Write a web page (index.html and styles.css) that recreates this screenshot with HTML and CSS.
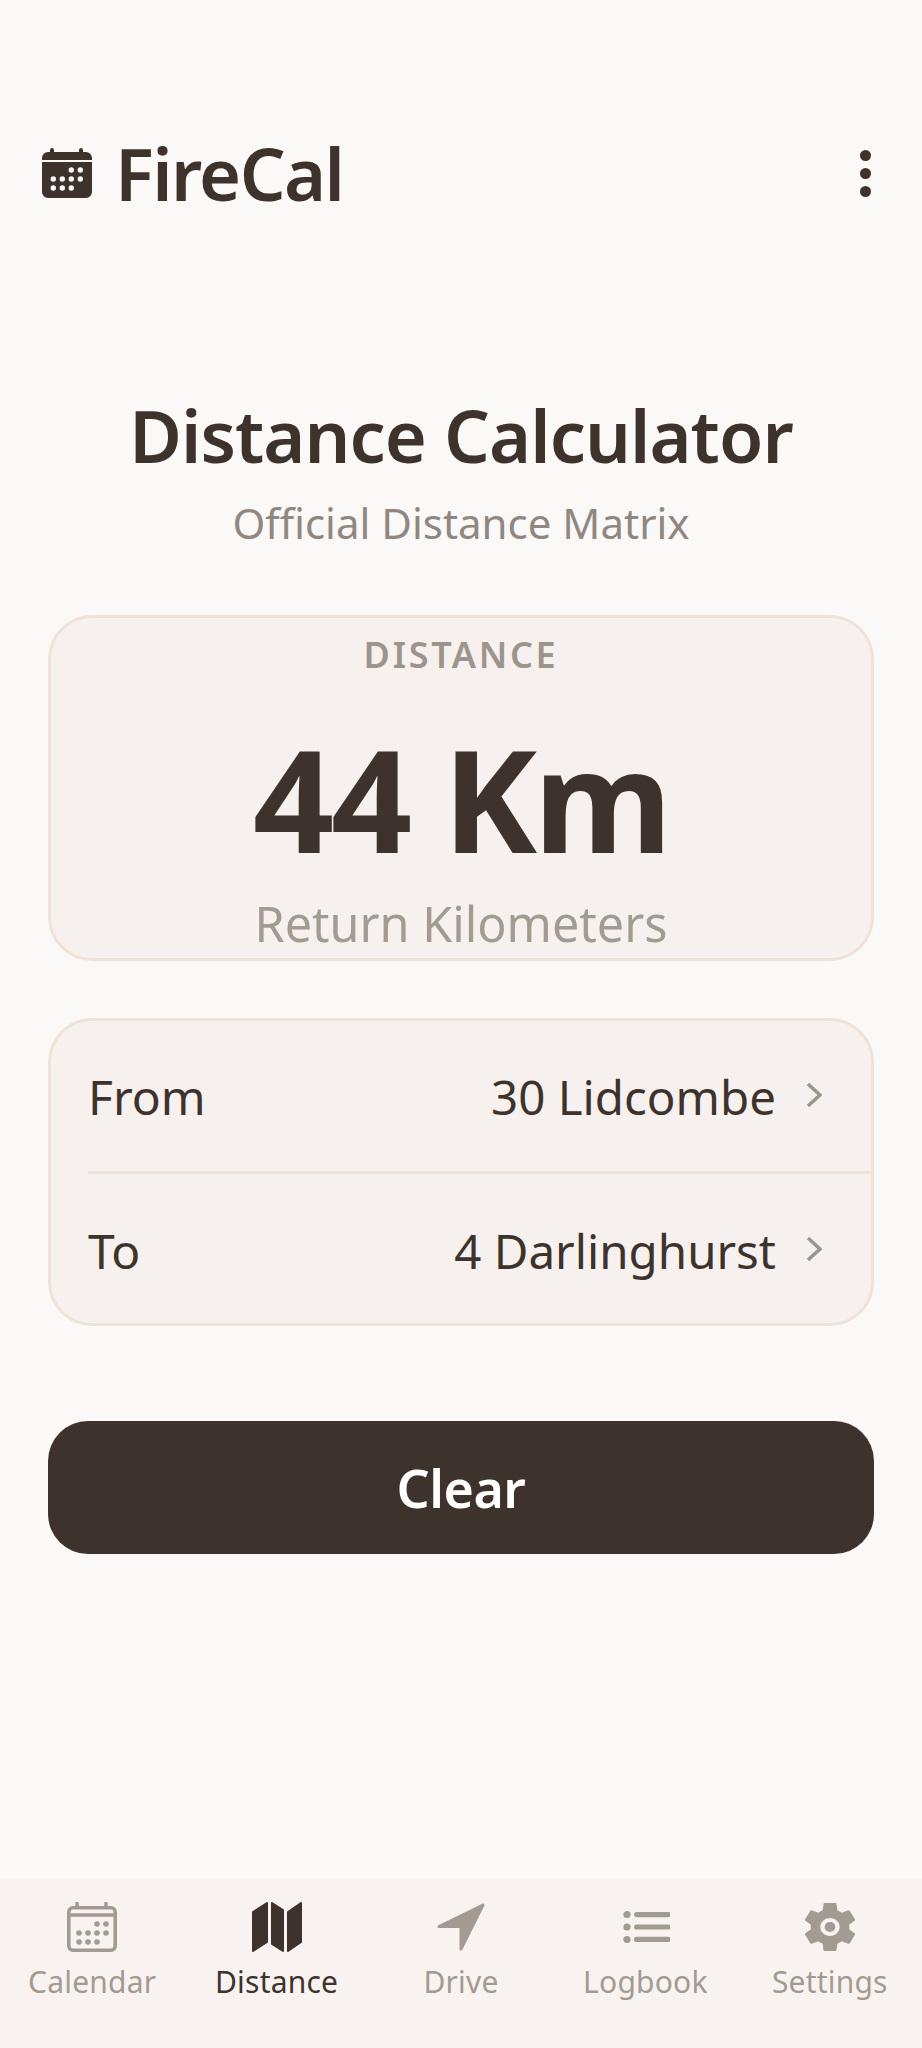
FILE: index.html
```html
<!DOCTYPE html>
<html lang="en">
<head>
<meta charset="utf-8">
<title>FireCal</title>
<link rel="stylesheet" href="styles.css">
</head>
<body>
<div class="app">
  <header class="topbar">
    <div class="brand">
      <svg class="brand-icon" viewBox="0 0 50 50"><path class="fill-dark" fill-rule="evenodd" d="M8 4V2a2 2 0 0 1 4 0v2h25V2a2 2 0 0 1 4 0v2h3a6 6 0 0 1 6 6v2H0v-2a6 6 0 0 1 6-6zM0 14h50v30a6 6 0 0 1-6 6H6a6 6 0 0 1-6-6z"/><g class="fill-page"><circle cx="29.3" cy="22" r="2.7"/><circle cx="38.3" cy="22" r="2.7"/><circle cx="11.3" cy="31" r="2.7"/><circle cx="20.3" cy="31" r="2.7"/><circle cx="29.3" cy="31" r="2.7"/><circle cx="38.3" cy="31" r="2.7"/><circle cx="11.3" cy="40" r="2.7"/><circle cx="20.3" cy="40" r="2.7"/><circle cx="29.3" cy="40" r="2.7"/></g></svg>
      <span class="brand-name">FireCal</span>
    </div>
    <div class="kebab"><i></i><i></i><i></i></div>
  </header>

  <main class="content">
    <h1 class="title">Distance Calculator</h1>
    <p class="subtitle">Official Distance Matrix</p>

    <section class="card result">
      <div class="result-label">DISTANCE</div>
      <div class="result-value">44 Km</div>
      <div class="result-note">Return Kilometers</div>
    </section>

    <section class="card routes">
      <div class="route route-first">
        <span class="route-key">From</span>
        <span class="route-val">30 Lidcombe</span>
        <svg class="chev" viewBox="0 0 16 26"><path d="M2 2l12 11L2 24"/></svg>
      </div>
      <div class="route">
        <span class="route-key">To</span>
        <span class="route-val">4 Darlinghurst</span>
        <svg class="chev" viewBox="0 0 16 26"><path d="M2 2l12 11L2 24"/></svg>
      </div>
    </section>

    <button class="clear">Clear</button>
  </main>

  <nav class="tabs">
    <div class="tab">
      <svg class="tab-icon" viewBox="0 0 50 50"><path class="stroke-muted" d="M1.8 13V44a4.2 4.2 0 0 0 4.2 4.2H44a4.2 4.2 0 0 0 4.2-4.2V10A4.2 4.2 0 0 0 44 5.800H6A4.200 4.200 0 0 0 1.800 10V13H48"/><path class="stroke-muted" d="M10 1.500V5M39 1.500V5"/><g class="fill-muted"><circle cx="30" cy="22" r="2.800"/><circle cx="39" cy="22" r="2.800"/><circle cx="12" cy="31" r="2.800"/><circle cx="21" cy="31" r="2.800"/><circle cx="30" cy="31" r="2.800"/><circle cx="39" cy="31" r="2.800"/><circle cx="12" cy="40" r="2.800"/><circle cx="21" cy="40" r="2.800"/><circle cx="30" cy="40" r="2.800"/></g></svg>
      <span class="tab-label">Calendar</span>
    </div>
    <div class="tab tab-active">
      <svg class="tab-icon" viewBox="0 0 50 50"><g class="map"><path d="M1 10L15 1V40L1 49Z"/><path d="M20 1L31 8V49L20 42Z"/><path d="M36 10L49 1V40L36 49Z"/></g></svg>
      <span class="tab-label">Distance</span>
    </div>
    <div class="tab">
      <svg class="tab-icon" viewBox="0 0 50 50"><path class="arrow" d="M47 3L3 24.500H25V47Z"/></svg>
      <span class="tab-label">Drive</span>
    </div>
    <div class="tab">
      <svg class="tab-icon" viewBox="0 0 50 50"><g class="fill-muted"><circle cx="7" cy="12.500" r="3.600"/><circle cx="7" cy="25" r="3.600"/><circle cx="7" cy="37.500" r="3.600"/><rect x="14" y="10" width="37" height="5.200" rx="2.600"/><rect x="14" y="22.400" width="37" height="5.200" rx="2.600"/><rect x="14" y="34.800" width="37" height="5.200" rx="2.600"/></g></svg>
      <span class="tab-label">Logbook</span>
    </div>
    <div class="tab">
      <svg class="tab-icon" viewBox="2.700 2 18.600 20" preserveAspectRatio="none"><path class="fill-muted" d="M19.140 12.940c.04-.3.06-.61.06-.94 0-.32-.02-.64-.07-.94l2.030-1.580c.18-.14.23-.41.12-.61l-1.920-3.320c-.12-.22-.37-.29-.59-.22l-2.390.96c-.5-.38-1.030-.7-1.620-.94l-.36-2.540c-.04-.24-.24-.41-.48-.41h-3.840c-.24 0-.43.17-.47.41l-.36 2.540c-.59.24-1.130.57-1.620.94l-2.390-.96c-.22-.08-.47 0-.59.22L2.740 8.870c-.12.21-.08.47.12.61l2.030 1.580c-.05.3-.09.63-.09.94s.02.64.07.94l-2.030 1.580c-.18.14-.23.41-.12.61l1.920 3.320c.12.22.37.29.59.22l2.390-.96c.5.38 1.030.7 1.620.94l.36 2.540c.05.24.24.41.48.41h3.840c.24 0 .44-.17.47-.41l.36-2.540c.59-.24 1.130-.56 1.620-.94l2.390.96c.22.08.47 0 .59-.22l1.920-3.320c.12-.22.07-.47-.12-.61l-2.010-1.580zM12 15.600c-1.980 0-3.600-1.620-3.600-3.600s1.620-3.600 3.600-3.600 3.600 1.620 3.600 3.600-1.620 3.600-3.600 3.600z"/><circle class="fill-muted" cx="12" cy="12" r="2"/></svg>
      <span class="tab-label">Settings</span>
    </div>
  </nav>
</div>
</body>
</html>
```
FILE: styles.css
```css
* { box-sizing: border-box; }
html, body { margin: 0; padding: 0; }
body { background: #fbf9f8; color: #3d332c; font-family: "Noto Sans", "Open Sans", sans-serif; }
.app { min-height: 2048px; display: flex; flex-direction: column; }

.fill-dark { fill: #3d332c; }
.fill-page { fill: #fbf9f8; }
.fill-muted { fill: #a39a92; }
.stroke-muted { fill: none; stroke: #a39a92; stroke-width: 3.6; stroke-linecap: round; }

.topbar { display: flex; justify-content: space-between; align-items: center; height: 80px; margin-top: 133px; padding: 0 42px; }
.brand { display: flex; align-items: center; gap: 23px; }
.brand-icon { width: 50px; height: 50px; display: block; }
.brand-name { font-size: 72px; line-height: 80px; font-weight: 600; letter-spacing: -1.600px; }
.kebab { display: flex; flex-direction: column; gap: 7px; margin-right: 9px; }
.kebab i { display: block; width: 11px; height: 11px; border-radius: 50%; background: #3d332c; }

.content { padding: 0 48px; }
.title { margin: 182px 0 0; text-align: center; font-size: 72px; line-height: 80px; font-weight: 600; letter-spacing: -0.900px; }
.subtitle { margin: 23px 0 0; text-align: center; font-size: 42px; line-height: 50px; color: #8f8780; letter-spacing: 0; }

.card { background: #f6f1ee; border: 3px solid #efe2d9; border-radius: 44px; }
.result { margin-top: 67px; height: 346px; display: flex; flex-direction: column; align-items: center; }
.result-label { margin-top: 15px; font-size: 36px; line-height: 44px; font-weight: 600; letter-spacing: 2.700px; color: #9c948d; }
.result-value { margin-top: 61px; font-size: 142px; line-height: 120px; font-weight: 700; letter-spacing: -3.200px; }
.result-note { margin-top: 38px; font-size: 48.500px; line-height: 54px; color: #a39a92; letter-spacing: 0; }

.routes { margin-top: 57px; height: 308px; padding-left: 37px; }
.route { display: flex; align-items: center; height: 152px; padding-right: 49px; }
.route-first { border-bottom: 3px solid #efe2d9; height: 153px; }
.route-key { flex: 1; font-size: 48px; line-height: 54px; position: relative; top: 1px; }
.route-val { font-size: 47.500px; line-height: 54px; position: relative; top: 1px; }
.chev { width: 16px; height: 26px; margin-left: 30px; margin-top: -3px; fill: none; stroke: #9c948d; stroke-width: 3.600; }

.clear { display: block; width: 100%; height: 133px; margin-top: 95px; border: 0; border-radius: 40px; background: #3d332c; color: #fff; font-family: inherit; font-size: 52px; font-weight: 600; letter-spacing: -0.500px; padding: 0; }

.tabs { margin-top: auto; height: 169px; background: #f8f3f0; display: grid; grid-template-columns: repeat(5, 184.400px); padding-top: 23px; }
.tab { display: flex; flex-direction: column; align-items: center; color: #a39a92; }
.tab-active { color: #3d332c; }
.tab-icon { width: 50px; height: 50px; display: block; }
.tab-label { margin-top: 8px; font-size: 30px; line-height: 44px; letter-spacing: 0.200px; }
.map path { fill: #3d332c; stroke: #3d332c; stroke-width: 2; stroke-linejoin: round; }
.arrow { fill: #a39a92; stroke: #a39a92; stroke-width: 3; stroke-linejoin: round; }
```
